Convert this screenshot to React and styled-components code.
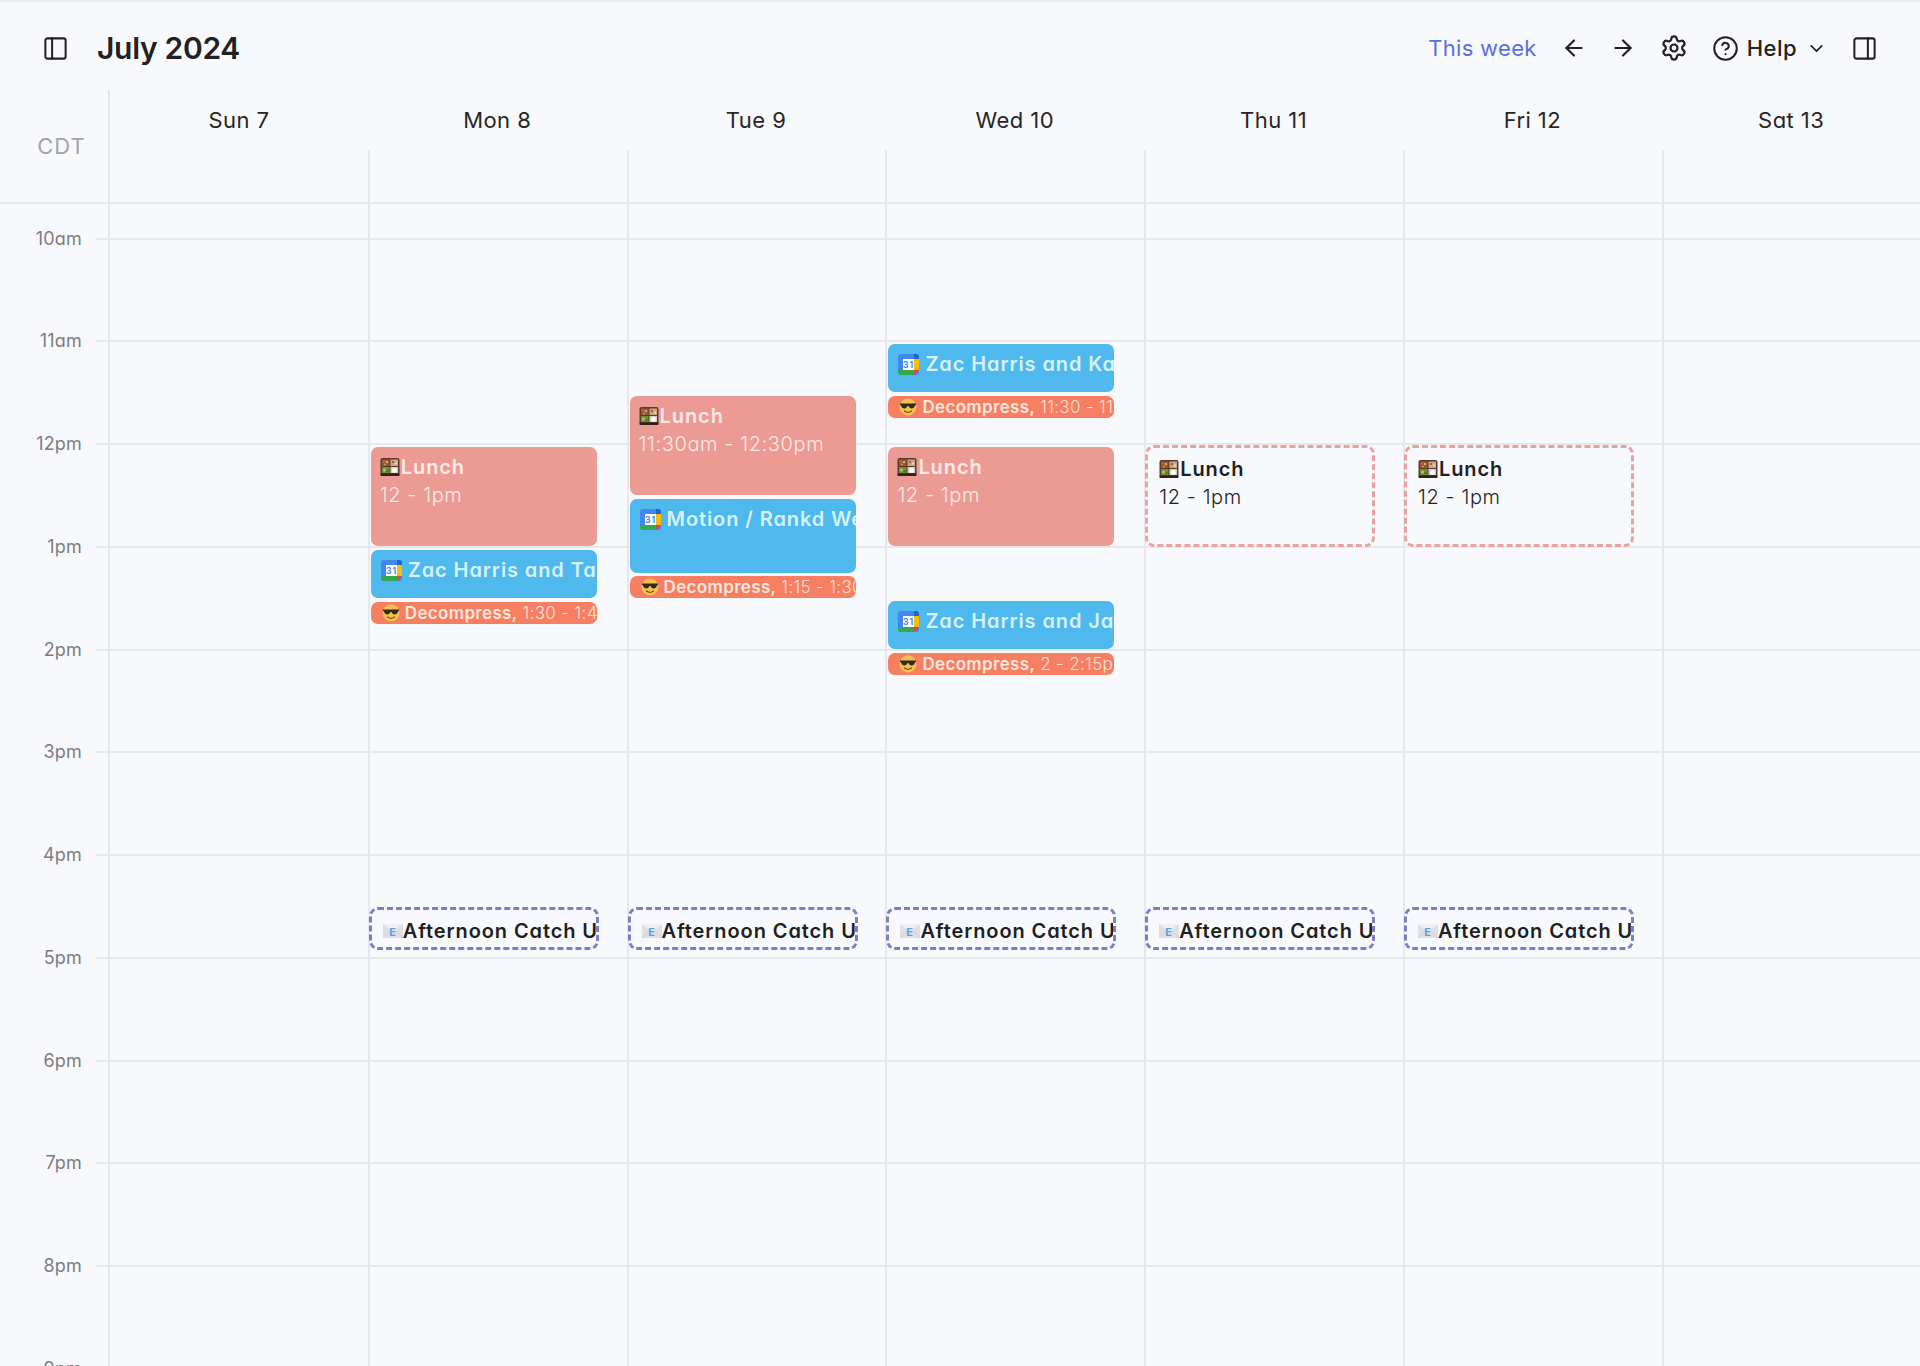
import React from 'react';
import styled, { createGlobalStyle } from 'styled-components';
import { PanelLeft, PanelRight, ArrowLeft, ArrowRight, Settings, CircleHelp, ChevronDown } from 'lucide-react';

const Global = createGlobalStyle`
  html, body { margin: 0; padding: 0; background: #f8f9fd; }
  body { font-family: Inter, "Open Sans", "Liberation Sans", sans-serif; font-feature-settings: "cv11" 1; overflow: hidden; }
  * { box-sizing: border-box; }
`;

const LINE = '#e7e8ee';
const HOUR = 102.78;

const Page = styled.div`
  width: 1920px; height: 1366px; overflow: hidden; background: #f8f9fd;
  border-top: 2px solid #ebecf2; display: flex; flex-direction: column;
`;
const TopBar = styled.header`
  height: 88px; flex: none; display: flex; align-items: center; justify-content: space-between;
  padding: 4px 42px 0; color: #212121;
`;
const Left = styled.div`display: flex; align-items: center; gap: 28px;`;
const Right = styled.div`display: flex; align-items: center; color: #212121;`;
const Title = styled.h1`margin: 0; font-size: 30px; font-weight: 600; letter-spacing: -0.01em; color: #212121;`;
const ThisWeek = styled.span`font-size: 22px; color: #5a6fe2; letter-spacing: 0.015em; margin-right: 24.5px;`;
const IconBtn = styled.span`display: inline-flex; margin-right: ${p => p.$gap}px;`;
const HelpLabel = styled.span`font-size: 22px; font-weight: 500; margin: 0 9px 0 8px; letter-spacing: 0.02em;`;

const DayHead = styled.div`
  height: 114px; flex: none; display: grid; grid-template-columns: 110px 257.8px repeat(6, 258.8px);
  border-bottom: 2px solid ${LINE};
`;
const TzCell = styled.div`
  border-right: 2px solid ${LINE}; color: #a4a4a6; font-size: 22px; letter-spacing: 0.04em;
  padding: 43px 22.5px 0 0; text-align: right;
`;
const DayCell = styled.div`display: flex; flex-direction: column; align-items: center; position: relative;`;
const DayName = styled.div`
  height: 60px; width: 100%; display: flex; align-items: center; justify-content: center;
  font-size: 22px; color: #262626; letter-spacing: 0.02em;
`;
const DayTick = styled.div`
  flex: 1; width: 100%; border-left: ${p => (p.$none ? 0 : `2px solid ${LINE}`)};
`;

const Body = styled.div`
  flex: 1; display: grid; grid-template-columns: 108px 259.8px repeat(6, 258.8px); min-height: 0;
`;
const Gutter = styled.div`display: flex; flex-direction: column; padding-top: 33.5px;`;
const GutterRow = styled.div`
  height: ${HOUR}px; flex: none; display: flex; align-items: flex-start; justify-content: flex-end;
`;
const HourLabel = styled.span`
  font-size: 18px; color: #7d7d80; width: 82px; text-align: right; margin-top: -10px; letter-spacing: 0.01em; white-space: nowrap;
`;
const Tick = styled.span`width: 12px; border-top: 2px solid ${LINE}; margin-left: 14px;`;
const Column = styled.div`
  position: relative; border-left: 2px solid ${LINE}; padding-top: 33.5px; display: flex; flex-direction: column;
`;
const HourCell = styled.div`height: ${HOUR}px; flex: none; border-top: 2px solid ${LINE};`;

const Block = styled.div`
  position: absolute; left: ${p => p.$left}px; top: ${p => p.$top}px; width: ${p => p.$w}px; height: ${p => p.$h}px;
  border-radius: 7px; overflow: hidden; white-space: nowrap; background: ${p => p.$bg}; color: ${p => p.$fg};
`;
const Dashed = styled(Block)`
  background: transparent; border: 3px dashed ${p => p.$line}; border-radius: 9px; color: #1f1f1f;
`;
const BlockTitle = styled.div`
  display: flex; align-items: center; font-size: 20px; font-weight: 600; letter-spacing: 0.045em; line-height: 28px;
  padding: ${p => p.$pad};
`;
const BlockTime = styled.div`font-size: 20px; font-weight: 300; letter-spacing: 0.03em; line-height: 28px; padding-left: ${p => p.$pl}px;`;
const TinyLine = styled.div`
  display: flex; align-items: center; height: 100%; font-size: 17px; font-weight: 600; letter-spacing: 0.02em; padding-left: 11px;
`;
const TinyTime = styled.span`font-weight: 300; margin-left: 5px; opacity: 0.95;`;
const GlyphSlot = styled.span`display: inline-flex; flex: none; margin-right: ${p => p.$gap}px;`;

const Bento = () => (
  <svg width="20" height="20" viewBox="0 0 20 20">
    <rect x="0.5" y="1" width="19" height="18" rx="2" fill="#5a3a2c" />
    <rect x="2" y="2.500" width="7.500" height="6.500" fill="#8d5a34" />
    <rect x="10.500" y="2.500" width="7.500" height="6.500" fill="#cfa77e" />
    <rect x="2" y="10" width="7.500" height="6" fill="#6f8f32" />
    <rect x="10.500" y="10" width="7.500" height="6" fill="#d9cfc7" />
    <circle cx="4" cy="4.500" r="1.200" fill="#e2563a" />
    <circle cx="7" cy="5" r="1.100" fill="#efc96a" />
    <circle cx="5" cy="7.500" r="1" fill="#e88a4a" />
    <circle cx="13" cy="5" r="1" fill="#8a4a2a" />
    <circle cx="16" cy="6.500" r="1" fill="#f2e6c8" />
    <circle cx="14.500" cy="13.500" r="2.400" fill="#fff" />
    <circle cx="4.500" cy="13" r="1.500" fill="#b2c964" />
    <circle cx="7.500" cy="14" r="1.100" fill="#4f6e22" />
    <rect x="0.5" y="16.500" width="19" height="2.500" rx="1" fill="#33201a" />
  </svg>
);
const GCal = () => (
  <svg width="21" height="21" viewBox="0 0 21 21">
    <rect x="0" y="0" width="21" height="21" rx="3" fill="#4285f4" />
    <path d="M16 5h5v11h-5z" fill="#fbbc04" />
    <path d="M0 16h16v5H3a3 3 0 0 1-3-3z" fill="#34a853" />
    <path d="M16 16h5l-5 5z" fill="#ea4335" />
    <path d="M16 0h2a3 3 0 0 1 3 3v2h-5z" fill="#1967d2" />
    <rect x="5" y="5" width="11" height="11" fill="#fff" />
    <text x="10.5" y="14" fontSize="8.5" fontWeight="700" textAnchor="middle" fill="#4285f4" fontFamily="Inter, sans-serif">31</text>
  </svg>
);
const Cool = () => (
  <svg width="18" height="18" viewBox="0 0 18 18">
    <circle cx="9" cy="9" r="8.5" fill="#f6c04a" />
    <path d="M1 5.500h16v1.500l-1 .3c-.3 2.600-2 3.200-3.400 3.200-1.600 0-2.600-1-3-2.500h-1.200c-.4 1.500-1.400 2.500-3 2.500C4 10.500 2.300 9.900 2 7.300L1 7z" fill="#2f2a26" />
    <path d="M5.500 13c2 1.500 5 1.500 7 0" stroke="#7a4a1e" strokeWidth="1.200" fill="none" strokeLinecap="round" />
  </svg>
);
const Mail = () => (
  <svg width="20" height="16" viewBox="0 0 20 16">
    <rect x="0" y="1" width="20" height="14" rx="1" fill="#dfe0e5" />
    <path d="M0 1l10 7 10-7z" fill="#f0f0f3" />
    <path d="M0 15l7-7M20 15l-7-7" stroke="#c6c7ce" strokeWidth="0.700" />
    <text x="10" y="12.500" fontSize="11" fontWeight="700" textAnchor="middle" fill="#5aa2e2" fontFamily="Inter, sans-serif">E</text>
  </svg>
);

const PINK = { $bg: '#ec9a94', $fg: '#fde9e6' };
const BLUE = { $bg: '#4fb8ec', $fg: '#d6f2ff' };
const ORANGE = { $bg: '#f67f62', $fg: '#ffe6de' };

const Lunch = ({ top, time }) => (
  <Block $left={1} $top={top} $w={226} $h={99} {...PINK}>
    <BlockTitle $pad="6px 0 0 9px"><GlyphSlot $gap={1}><Bento /></GlyphSlot>Lunch</BlockTitle>
    <BlockTime $pl={9}>{time}</BlockTime>
  </Block>
);
const Meet = ({ top, h, name }) => (
  <Block $left={1} $top={top} $w={226} $h={h} {...BLUE}>
    <BlockTitle $pad="6px 0 0 10px"><GlyphSlot $gap={6}><GCal /></GlyphSlot>{name}</BlockTitle>
  </Block>
);
const Decompress = ({ top, time }) => (
  <Block $left={1} $top={top} $w={226} $h={22} {...ORANGE}>
    <TinyLine><GlyphSlot $gap={5}><Cool /></GlyphSlot>Decompress,<TinyTime>{time}</TinyTime></TinyLine>
  </Block>
);
const PlannedLunch = () => (
  <Dashed $left={-1} $top={241} $w={230} $h={102} $line="#e8a3a0">
    <BlockTitle $pad="7px 0 0 11px"><GlyphSlot $gap={1}><Bento /></GlyphSlot>Lunch</BlockTitle>
    <BlockTime $pl={11}>12 - 1pm</BlockTime>
  </Dashed>
);
const CatchUp = () => (
  <Dashed $left={-1} $top={703} $w={230} $h={43} $line="#7b80c2">
    <BlockTitle $pad="7px 0 0 11px"><GlyphSlot $gap={0}><Mail /></GlyphSlot>Afternoon Catch Up</BlockTitle>
  </Dashed>
);

const HOURS = ['10am', '11am', '12pm', '1pm', '2pm', '3pm', '4pm', '5pm', '6pm', '7pm', '8pm', '9pm'];
const DAYS = ['Sun 7', 'Mon 8', 'Tue 9', 'Wed 10', 'Thu 11', 'Fri 12', 'Sat 13'];

const EVENTS = [
  null,
  <>
    <Lunch top={243} time="12 - 1pm" />
    <Meet top={346} h={48} name="Zac Harris and Taylor" />
    <Decompress top={398} time="1:30 - 1:45pm" />
    <CatchUp />
  </>,
  <>
    <Lunch top={192} time="11:30am - 12:30pm" />
    <Meet top={295} h={74} name="Motion / Rankd Weekly" />
    <Decompress top={372} time="1:15 - 1:30pm" />
    <CatchUp />
  </>,
  <>
    <Meet top={140} h={48} name="Zac Harris and Kayla" />
    <Decompress top={192} time="11:30 - 11:45am" />
    <Lunch top={243} time="12 - 1pm" />
    <Meet top={397} h={48} name="Zac Harris and Jacob" />
    <Decompress top={449} time="2 - 2:15pm" />
    <CatchUp />
  </>,
  <>
    <PlannedLunch />
    <CatchUp />
  </>,
  <>
    <PlannedLunch />
    <CatchUp />
  </>,
  null,
];

export default function App() {
  return (
    <Page>
      <Global />
      <TopBar>
        <Left>
          <PanelLeft size={27} strokeWidth={1.8} />
          <Title>July 2024</Title>
        </Left>
        <Right>
          <ThisWeek>This week</ThisWeek>
          <IconBtn $gap={22.5}><ArrowLeft size={26} strokeWidth={2} /></IconBtn>
          <IconBtn $gap={24}><ArrowRight size={26} strokeWidth={2} /></IconBtn>
          <IconBtn $gap={24}><Settings size={28} strokeWidth={1.9} /></IconBtn>
          <CircleHelp size={27} strokeWidth={1.8} />
          <HelpLabel>Help</HelpLabel>
          <IconBtn $gap={24}><ChevronDown size={21} strokeWidth={2} /></IconBtn>
          <PanelRight size={27} strokeWidth={1.8} />
        </Right>
      </TopBar>
      <DayHead>
        <TzCell>CDT</TzCell>
        {DAYS.map((d, i) => (
          <DayCell key={d}>
            <DayName>{d}</DayName>
            <DayTick $none={i === 0} />
          </DayCell>
        ))}
      </DayHead>
      <Body>
        <Gutter>
          {HOURS.map(h => (
            <GutterRow key={h}>
              <HourLabel>{h}</HourLabel>
              <Tick />
            </GutterRow>
          ))}
        </Gutter>
        {DAYS.map((d, i) => (
          <Column key={d}>
            {HOURS.map(h => <HourCell key={h} />)}
            {EVENTS[i]}
          </Column>
        ))}
      </Body>
    </Page>
  );
}
